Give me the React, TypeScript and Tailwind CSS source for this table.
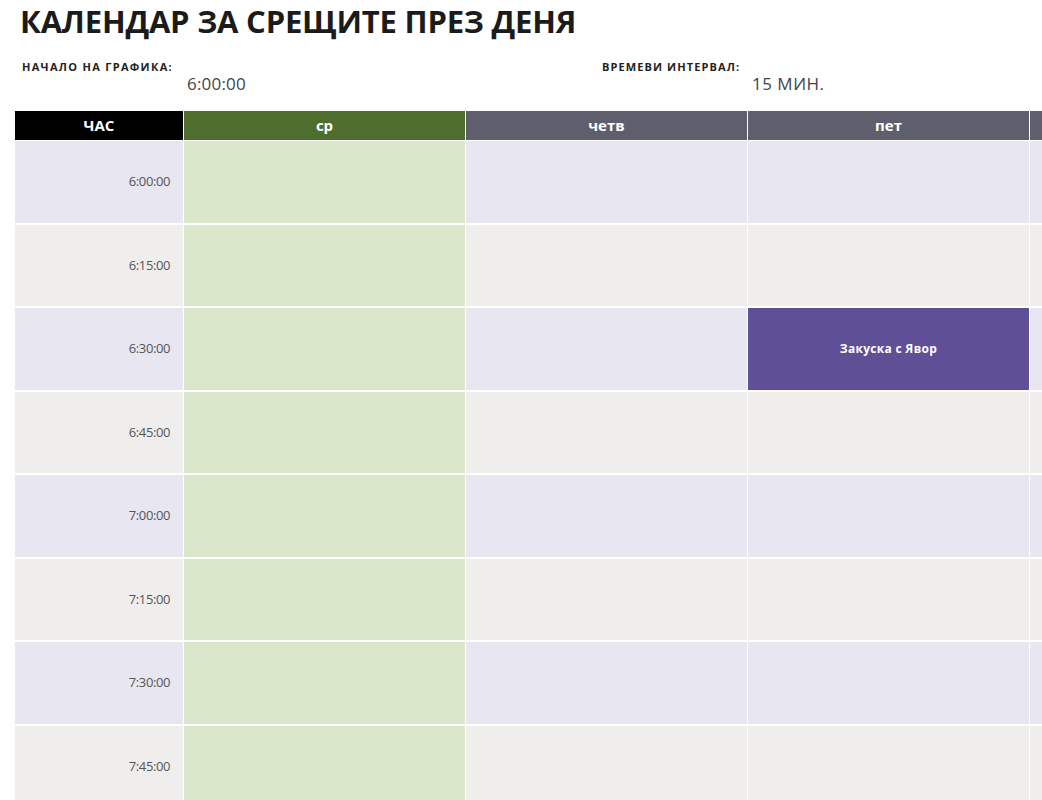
import React from 'react';

type Day = {
  name: string;
  head: string;
  body: string | null;
};

const days: Day[] = [
  { name: 'ср', head: 'bg-[#4f6e2d]', body: 'bg-[#dae7cb]' },
  { name: 'четв', head: 'bg-[#5f5e6c]', body: null },
  { name: 'пет', head: 'bg-[#5f5e6c]', body: null },
  { name: '', head: 'bg-[#5f5e6c]', body: null },
];

const times = ['6:00:00', '6:15:00', '6:30:00', '6:45:00', '7:00:00', '7:15:00', '7:30:00', '7:45:00'];

const events: Record<string, string> = {
  '2-2': 'Закуска с Явор',
};

function rowBg(i: number) {
  return i % 2 === 0 ? 'bg-[#e7e6f1]' : 'bg-[#efeeec]';
}

export default function App() {
  return (
    <div className="h-[800px] w-[1042px] overflow-hidden bg-white font-['Open_Sans',sans-serif] text-[#222]">
      <h1 className="ml-[20px] pt-[1px] text-[31px] font-bold leading-[40px] tracking-[-0.2px] text-[#1b1b1b]">
        КАЛЕНДАР ЗА СРЕЩИТЕ ПРЕЗ ДЕНЯ
      </h1>

      <div className="mt-[20px] flex h-[50px]">
        <div className="ml-[22px] flex w-[580px]">
          <div className="w-[165px] text-[11px] font-bold leading-[12px] tracking-[1.3px] text-[#222]">
            НАЧАЛО НА ГРАФИКА:
          </div>
          <div className="pt-[13px] text-[17px] leading-[20px] tracking-[0.2px] text-[#444]">6:00:00</div>
        </div>
        <div className="flex">
          <div className="w-[150px] text-[11px] font-bold leading-[12px] tracking-[1.1px] text-[#222]">
            ВРЕМЕВИ ИНТЕРВАЛ:
          </div>
          <div className="pt-[13px] text-[17px] leading-[20px] tracking-[0.5px] text-[#444]">15 МИН.</div>
        </div>
      </div>

      <div className="ml-[15px] grid grid-cols-[168px_281px_281px_281px_100px] gap-x-px">
        <div className="flex h-[29px] items-center justify-center bg-black text-[15px] font-bold text-white">
          ЧАС
        </div>
        {days.map((d, i) => (
          <div
            key={i}
            className={`flex h-[29px] items-center justify-center text-[15px] font-bold text-white ${d.head}`}
          >
            {d.name}
          </div>
        ))}
      </div>

      <div className="ml-[15px] mt-px">
        {times.map((t, r) => (
          <div key={t} className="grid h-[83.5px] grid-cols-[168px_281px_281px_281px_100px] gap-x-px border-b-2 border-white">
            <div className={`flex items-center justify-end pr-[13px] text-[13px] tracking-[-0.4px] text-[#555] ${rowBg(r)}`}>
              {t}
            </div>
            {days.map((d, c) => {
              const ev = events[`${r}-${c}`];
              if (ev) {
                return (
                  <div key={c} className="flex items-center justify-center bg-[#5e4f97] text-[12px] font-bold tracking-[0.3px] text-white">
                    {ev}
                  </div>
                );
              }
              return <div key={c} className={d.body ?? rowBg(r)} />;
            })}
          </div>
        ))}
      </div>
    </div>
  );
}
